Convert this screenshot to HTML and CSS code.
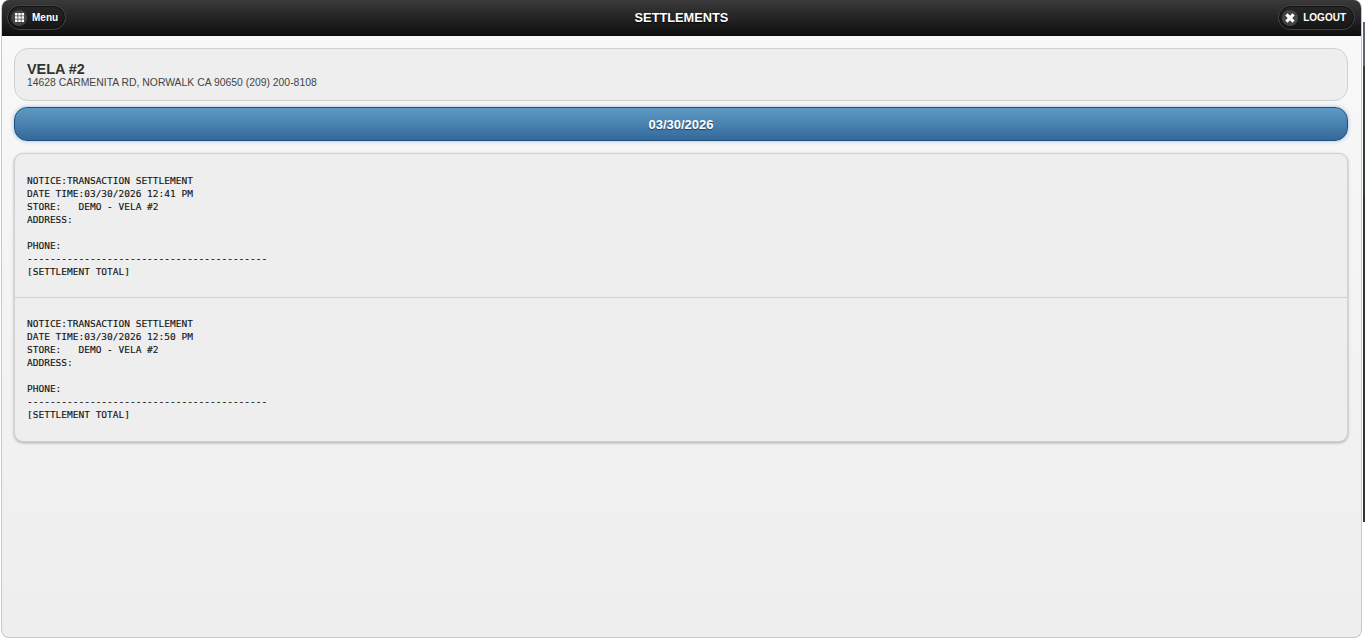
FILE: index.html
```html
<!DOCTYPE html>
<html lang="en">
<head>
<meta charset="utf-8">
<title>Settlements</title>
<link rel="stylesheet" href="styles.css">
</head>
<body>
<div class="backdrop"></div>
<div class="page">
  <header class="topbar">
    <div class="bar-left">
      <a class="pill">
        <span class="pill-icon">
          <svg viewBox="0 0 9 9" width="9" height="9"><path fill="#fff" d="M0 0h2.500v2.500H0zM3.250 0h2.500v2.500h-2.500zM6.500 0h2.500v2.500H6.500zM0 3.250h2.500v2.500H0zM3.250 3.250h2.500v2.500h-2.500zM6.500 3.250h2.500v2.500H6.500zM0 6.500h2.500v2.500H0zM3.250 6.500h2.500v2.500h-2.500zM6.500 6.500h2.500v2.500H6.500z"/></svg>
        </span>
        <span>Menu</span>
      </a>
    </div>
    <h1 class="title">SETTLEMENTS</h1>
    <div class="bar-right">
      <a class="pill pill-wide">
        <span class="pill-icon">
          <svg viewBox="0 0 10 10" width="10" height="10"><path fill="none" stroke="#fff" stroke-width="3.200" d="M1.400 1.400l7.200 7.200M8.600 1.400l-7.200 7.200"/></svg>
        </span>
        <span>LOGOUT</span>
      </a>
    </div>
  </header>
  <main class="content">
    <section class="store">
      <h2 class="store-name">VELA #2</h2>
      <p class="store-addr">14628 CARMENITA RD, NORWALK CA 90650 (209) 200-8108</p>
    </section>
    <div class="date-btn">03/30/2026</div>
    <section class="list">
      <pre class="item">NOTICE:TRANSACTION SETTLEMENT
DATE TIME:03/30/2026 12:41 PM
STORE:   DEMO - VELA #2
ADDRESS:

PHONE:
------------------------------------------
[SETTLEMENT TOTAL]</pre>
      <pre class="item">NOTICE:TRANSACTION SETTLEMENT
DATE TIME:03/30/2026 12:50 PM
STORE:   DEMO - VELA #2
ADDRESS:

PHONE:
------------------------------------------
[SETTLEMENT TOTAL]</pre>
    </section>
  </main>
</div>
</body>
</html>
```
FILE: styles.css
```css
* { box-sizing: border-box; }
html, body { margin: 0; height: 100%; overflow: hidden; background: #fff; }
body {
  font-family: "Liberation Sans", Arial, sans-serif;
}
.backdrop {
  position: absolute;
  top: 22px;
  right: 0;
  width: 2px;
  height: 500px;
  background: linear-gradient(#5c6478 0 44px, #2f403c 44px 172px, #333333 172px);
}
.page {
  position: relative;
  width: 1361px;
  height: 638px;
  margin-left: 1px;
  border-radius: 8px;
  border: 1px solid #c8c8c8;
  border-top: 0;
  overflow: hidden;
  display: flex;
  flex-direction: column;
  background: linear-gradient(#f9f9f9, #eeeeee);
}
.topbar {
  height: 36px;
  flex: none;
  display: grid;
  grid-template-columns: 1fr auto 1fr;
  align-items: center;
  padding: 5px 5px 6px;
  background: linear-gradient(#3a3a3a, #0e0e0e);
  color: #fff;
}
.bar-left { display: flex; }
.bar-right { display: flex; justify-content: flex-end; }
.title {
  margin: 0;
  font-size: 12.800px;
  font-weight: 700;
  text-shadow: 0 1px 1px #000;
}
.pill {
  display: flex;
  align-items: center;
  height: 25px;
  border-radius: 13px;
  border: 1px solid #454545;
  background: linear-gradient(#262626, #161616);
  box-shadow: inset 0 0 0 1px #111;
  font-size: 10px;
  font-weight: 700;
  color: #fff;
  gap: 5px;
  padding: 0 7px 0 3px;
}
.pill-wide { padding-right: 8px; margin-right: 1px; }
.pill-icon {
  width: 16px;
  height: 16px;
  border-radius: 50%;
  background: #444;
  display: flex;
  align-items: center;
  justify-content: center;
}
.content {
  flex: 1;
  padding: 12px 13px 12px 12px;
  display: flex;
  flex-direction: column;
}
.store {
  height: 53px;
  border: 1px solid #d0d0d0;
  border-radius: 14px;
  background: #eeeeee;
  padding: 13px 12px 0;
  color: #333;
}
.store-name {
  margin: 0;
  font-size: 14.400px;
  line-height: 14px;
  font-weight: 700;
}
.store-addr {
  margin: 1px 0 0;
  font-size: 10.400px;
  line-height: 12px;
  color: #444;
}
.date-btn {
  margin-top: 6px;
  height: 34px;
  border: 1px solid #1f4f78;
  border-radius: 13px;
  background: linear-gradient(#5f9ac4, #33699b);
  box-shadow: 0 0 4px rgba(56,123,190,.45);
  color: #fff;
  font-size: 13px;
  font-weight: 700;
  padding-top: 1px;
  text-shadow: 0 1px 1px #1f3f5f;
  display: flex;
  align-items: center;
  justify-content: center;
}
.list {
  margin-top: 12px;
  border: 1px solid #d0d0d0;
  border-radius: 9px;
  background: #eeeeee;
  box-shadow: 0 1px 3px rgba(0,0,0,.3);
}
.item {
  margin: 0;
  padding: 20px 12px 0;
  font-family: "DejaVu Sans Mono", "Liberation Mono", monospace;
  font-size: 9.500px;
  line-height: 13px;
  color: #111;
  -webkit-text-stroke: 0.12px #111;
  height: 143px;
}
.item + .item { border-top: 1px solid #d2d2d2; height: 144px; padding-top: 19px; }
```
